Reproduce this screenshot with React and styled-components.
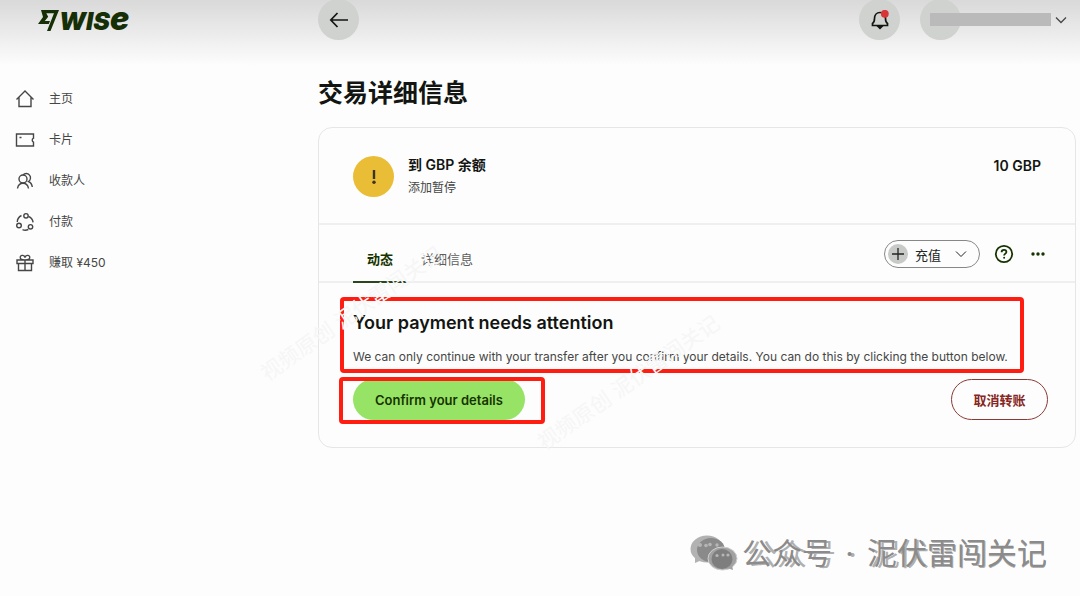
import React from "react";
import styled, { createGlobalStyle } from "styled-components";

const Global = createGlobalStyle`
  * { box-sizing: border-box; }
  body {
    margin: 0;
    background: #fdfdfd;
    color: #121511;
    font-family: Inter, "Noto Sans CJK SC", sans-serif;
  }
  button { font-family: inherit; cursor: pointer; margin: 0; padding: 0; }
  h1, h2, p { margin: 0; }
  svg { display: block; flex: none; }
`;

const Page = styled.div`
  position: relative;
  min-height: 100vh;
  overflow: hidden;
  background: linear-gradient(#d9d9d9, #fdfdfd 66px);
`;

const Columns = styled.div`
  display: flex;
`;

const Sidebar = styled.aside`
  flex: none;
  width: 318px;
`;

const Logo = styled.a`
  display: flex;
  align-items: center;
  height: 40px;
  padding-left: 38px;
  color: #162f06;
  text-decoration: none;
  font-size: 25px;
  line-height: 40px;
  font-weight: 900;
  font-style: italic;
`;

const LogoTail = styled.span`
  font-size: 32px;
`;

const Nav = styled.nav`
  display: flex;
  flex-direction: column;
  padding: 38px 0 0 15px;
`;

const NavLink = styled.a`
  display: flex;
  align-items: center;
  gap: 14px;
  height: 41px;
  color: #454745;
  font-size: 12px;
  line-height: 20px;
  text-decoration: none;
`;

const Main = styled.main`
  flex: 1;
  min-width: 0;
  padding-right: 4px;
`;

const TopBar = styled.header`
  display: flex;
  align-items: center;
  justify-content: space-between;
  height: 39px;
`;

const TopActions = styled.div`
  display: flex;
  align-items: center;
  gap: 20px;
  padding-right: 9px;
`;

const RoundButton = styled.button`
  display: grid;
  place-items: center;
  width: 41px;
  height: 41px;
  border: 0;
  border-radius: 50%;
  background: #d0d2cf;
  color: #121511;
`;

const Account = styled.button`
  display: flex;
  align-items: center;
  border: 0;
  background: none;
  color: #454745;
`;

const Avatar = styled.span`
  width: 41px;
  height: 41px;
  border-radius: 50%;
  background: #d0d2cf;
`;

const HiddenName = styled.span`
  width: 121px;
  height: 13px;
  margin: 0 4px 0 -31px;
  background: #bababa;
`;

const Title = styled.h1`
  margin-top: 35px;
  font-size: 25px;
  line-height: 38px;
  font-weight: 600;
`;

const Card = styled.section`
  margin-top: 15px;
  border: 1px solid #e6e6e6;
  border-radius: 14px;
`;

const Summary = styled.div`
  display: flex;
  align-items: center;
  gap: 14px;
  height: 97px;
  padding: 2px 34px 0;
  border-bottom: 2px solid #efefef;
`;

const Status = styled.span`
  display: grid;
  place-items: center;
  width: 41px;
  height: 41px;
  border-radius: 50%;
  background: #eabd37;
  color: #3a341c;
`;

const SummaryText = styled.div`
  flex: 1;
`;

const Strong = styled.p`
  font-size: 14px;
  line-height: 22px;
  font-weight: 600;
`;

const Muted = styled.p`
  color: #454745;
  font-size: 12px;
  line-height: 24px;
`;

const Amount = styled(Strong)`
  align-self: flex-start;
  margin-top: 25px;
`;

const TabBar = styled.div`
  display: flex;
  align-items: flex-end;
  justify-content: space-between;
  height: 58px;
  padding: 0 27px 0 34px;
  border-bottom: 2px solid #efefef;
`;

const Tabs = styled.div`
  display: flex;
`;

const Tab = styled.button`
  height: 48px;
  margin-bottom: -2px;
  && { padding: 0 14px; }
  border: 0;
  border-bottom: 2px solid ${(p) => (p.$active ? "#2b461a" : "transparent")};
  background: none;
  color: ${(p) => (p.$active ? "#163300" : "#5d5f5d")};
  font-size: 13px;
  font-weight: ${(p) => (p.$active ? 600 : 400)};
`;

const Tools = styled.div`
  display: flex;
  align-items: center;
  gap: 14px;
  height: 28px;
  margin-bottom: 13px;
`;

const TopUp = styled.button`
  display: flex;
  align-items: center;
  gap: 7px;
  width: 96px;
  height: 28px;
  && { padding: 0 0 0 3px; }
  border: 1px solid #868886;
  border-radius: 14px;
  background: none;
  color: #222521;
  font-size: 13px;
  font-weight: 400;
`;

const Plus = styled.span`
  display: grid;
  place-items: center;
  width: 20px;
  height: 20px;
  border-radius: 50%;
  background: #c8cac7;
`;

const IconButton = styled.button`
  display: grid;
  place-items: center;
  width: 20px;
  height: 20px;
  border: 0;
  background: none;
  color: #163300;
`;

const Body = styled.div`
  padding: 14px 27px 27px 21px;
`;

const Notice = styled.div`
  width: fit-content;
  height: 76px;
  padding: 10px 12px 0 9px;
  border: 4px solid #ff1c10;
  border-radius: 4px;
`;

const NoticeTitle = styled.h2`
  font-size: 18px;
  line-height: 24px;
  font-weight: 600;
`;

const NoticeText = styled.p`
  margin-top: 12px;
  color: #454745;
  font-size: 12px;
  line-height: 20px;
`;

const Actions = styled.div`
  display: flex;
  align-items: center;
  justify-content: space-between;
  margin-top: 6px;
  padding-left: 13px;
`;

const Marked = styled.div`
  position: relative;
  &::after {
    content: "";
    position: absolute;
    inset: -2px -20px -4px -14px;
    border: 4px solid #ff1c10;
    border-radius: 4px;
    pointer-events: none;
  }
`;

const Primary = styled.button`
  display: block;
  height: 41px;
  && { padding: 0 22px; }
  border: 0;
  border-radius: 21px;
  background: #96e366;
  color: #163300;
  font-size: 13px;
  font-weight: 600;
`;

const Danger = styled.button`
  width: 97px;
  height: 41px;
  border: 1px solid #8a3a34;
  border-radius: 21px;
  background: none;
  color: #86261f;
  font-size: 13px;
  font-weight: 600;
`;

const Stamp = styled.span`
  position: absolute;
  left: ${(p) => p.$x}px;
  top: ${(p) => p.$y}px;
  color: #f6f6f6;
  font-size: 21px;
  line-height: 30px;
  white-space: nowrap;
  transform: rotate(-35deg);
  pointer-events: none;
`;

const Credit = styled.div`
  position: absolute;
  right: 33px;
  bottom: 22px;
  display: flex;
  align-items: center;
  gap: 4px;
`;

const CreditText = styled.div`
  display: flex;
  font-size: 30px;
  line-height: 42px;
  white-space: pre;
  color: #8b8b8b;
`;

const Ghosted = styled.span`
  text-shadow: ${(p) => p.$shift}px 1px 0 rgba(130, 130, 130, 0.65);
`;

const Dot = styled(Ghosted)`
  width: 35px;
  text-align: center;
`;

const Icon = ({ size = 20, width = 1.4, children, box = 20 }) => (
  <svg width={size} height={size} viewBox={`0 0 ${box} ${box}`} fill="none" stroke="currentColor" strokeWidth={width} aria-hidden="true">
    {children}
  </svg>
);

const Chevron = ({ size = 12 }) => (
  <Icon size={size} box={12} width={1.3}><path d="M1 3.5l5 5 5-5" /></Icon>
);

const items = [
  ["主页", <><path d="M1.5 10.5L10 2l8.500 8.500M4 8.500V17.500H16V8.500" /></>],
  ["卡片", <><path d="M1.500 4H18.500V8.200c-1.700.8-1.700 3.200 0 4V16H1.500zM4.500 7.500h2" /></>],
  ["收款人", <><circle cx="8" cy="8" r="4" /><path d="M2.500 17.500c.5-3 2.500-5.200 5.500-5.200s5 2.200 5.500 5.200M8 4A4.300 4.300 0 1 1 13.500 10.500c2 .8 3.400 2.700 3.800 5.500" /></>],
  ["付款", <><circle cx="11" cy="3.800" r="2.200" /><circle cx="4" cy="13.500" r="2.300" /><circle cx="15.500" cy="14.800" r="2.200" /><path d="M6.500 3.500C4 4.700 2.300 7 2.300 10M13.500 4.500c2.500 1 4.200 3 4.600 5.800M7.500 17.700c2 .8 4 .7 5.800-.2" /></>],
  ["赚取 ¥450", <><path d="M2 7H18V10.500H2zM3.500 10.500V17.500H16.500V10.500M10 7V17.500M10 7C6 7 4.800 5.500 5.300 3.700 6 1.600 9.500 2 10 4.500 10.500 2 14 1.600 14.700 3.700 15.200 5.500 14 7 10 7z" /></>],
];

export default function App() {
  return (
    <>
      <Global />
      <Page>
        <Columns>
          <Sidebar>
            <Logo href="#" aria-label="Wise">
              <svg width="21" height="21" viewBox="0 0 21 21" fill="currentColor" aria-hidden="true">
                <path d="M3 0H21L12.500 21H9L16 3.300H8.300L10.200 6.700 6.800 11H12L10.800 14H0L5 6.900z" />
              </svg>
              <span>WIS<LogoTail>e</LogoTail></span>
            </Logo>
            <Nav>
              {items.map(([label, drawing]) => (
                <NavLink href="#" key={label}><Icon>{drawing}</Icon>{label}</NavLink>
              ))}
            </Nav>
          </Sidebar>
          <Main>
            <TopBar>
              <RoundButton aria-label="返回">
                <Icon width={1.7}><path d="M19 10H2M8.500 3L1.800 10l6.700 7" /></Icon>
              </RoundButton>
              <TopActions>
                <RoundButton aria-label="通知">
                  <Icon width={1.7}>
                    <path d="M2.500 15.500V13.500C4.200 12.500 4.500 11.500 4.500 8.500 4.500 5 6.500 2.500 10 2.500S15.500 5 15.500 8.500C15.500 11.500 15.800 12.500 17.500 13.500V15.500z" />
                    <path d="M8 16.300h4L10 18.300z" fill="currentColor" />
                    <circle cx="14.800" cy="3.800" r="3.900" fill="#d93438" stroke="none" />
                  </Icon>
                </RoundButton>
                <Account aria-label="账户">
                  <Avatar /><HiddenName /><Chevron />
                </Account>
              </TopActions>
            </TopBar>
            <Title>交易详细信息</Title>
            <Card>
              <Summary>
                <Status>
                  <svg width="4" height="14" viewBox="0 0 4 14" fill="currentColor" aria-hidden="true">
                    <path d="M.8 0H3.200V9H.8z" /><circle cx="2" cy="12.200" r="1.700" />
                  </svg>
                </Status>
                <SummaryText>
                  <Strong>到 GBP 余额</Strong>
                  <Muted>添加暂停</Muted>
                </SummaryText>
                <Amount>10 GBP</Amount>
              </Summary>
              <TabBar>
                <Tabs role="tablist">
                  <Tab role="tab" aria-selected="true" $active>动态</Tab>
                  <Tab role="tab" aria-selected="false">详细信息</Tab>
                </Tabs>
                <Tools>
                  <TopUp>
                    <Plus><Icon size={12} box={12} width={1.3}><path d="M6 0V12M0 6H12" /></Icon></Plus>
                    充值
                    <Icon size={26} box={26} width={1}><path d="M8 10.500l5 5 5-5" /></Icon>
                  </TopUp>
                  <IconButton aria-label="帮助">
                    <Icon width={1.800}>
                      <circle cx="10" cy="10" r="8.200" />
                      <path d="M7.600 8.200C7.600 6.700 8.600 5.800 10 5.800s2.400.9 2.400 2.100c0 1.700-2.300 1.700-2.300 3.600" />
                      <circle cx="10.100" cy="13.700" r="1" fill="currentColor" stroke="none" />
                    </Icon>
                  </IconButton>
                  <IconButton aria-label="更多">
                    <Icon><g fill="currentColor" stroke="none"><circle cx="5" cy="10" r="1.700" /><circle cx="10" cy="10" r="1.700" /><circle cx="15" cy="10" r="1.700" /></g></Icon>
                  </IconButton>
                </Tools>
              </TabBar>
              <Body>
                <Notice>
                  <NoticeTitle>Your payment needs attention</NoticeTitle>
                  <NoticeText>We can only continue with your transfer after you confirm your details. You can do this by clicking the button below.</NoticeText>
                </Notice>
                <Actions>
                  <Marked><Primary>Confirm your details</Primary></Marked>
                  <Danger>取消转账</Danger>
                </Actions>
              </Body>
            </Card>
          </Main>
        </Columns>
        <Stamp $x={244} $y={299}>视频原创 泥伏雷闯关记</Stamp>
        <Stamp $x={521} $y={368}>视频原创 泥伏雷闯关记</Stamp>
        <Credit>
          <svg width="48" height="36" viewBox="0 0 48 36" aria-hidden="true">
            <g fill="#b2b2b2"><ellipse cx="17" cy="14" rx="16.500" ry="13.500" /><path d="M5 22V28l7-3z" /></g>
            <ellipse cx="21" cy="15" rx="14" ry="12" fill="#8a8a8a" />
            <g fill="#a2a2a2" stroke="#d0d0d0"><ellipse cx="32.500" cy="23.500" rx="14.500" ry="11.500" /></g>
            <path d="M37 33l6 2-1-5z" fill="#a2a2a2" />
            <ellipse cx="32" cy="24" rx="10.500" ry="10" fill="#7e7e7e" />
            <g fill="#b6b6b6"><circle cx="10" cy="10" r="2" /><circle cx="16" cy="10.500" r="1.800" /><circle cx="20" cy="9.500" r="1.800" /><circle cx="27" cy="10" r="1.700" /><circle cx="27" cy="20.500" r="1.600" /><circle cx="33" cy="20" r="1.500" /><circle cx="38" cy="20" r="1.600" /></g>
          </svg>
          <CreditText>
            <Ghosted $shift={5}>公众</Ghosted>
            <Ghosted $shift={4}>号</Ghosted>
            <Dot $shift={3}>·</Dot>
            <Ghosted $shift={3}>泥</Ghosted>
            <Ghosted $shift={2}>伏</Ghosted>
            <Ghosted $shift={1}>雷闯</Ghosted>
            <Ghosted $shift={0}>关记</Ghosted>
          </CreditText>
        </Credit>
      </Page>
    </>
  );
}
